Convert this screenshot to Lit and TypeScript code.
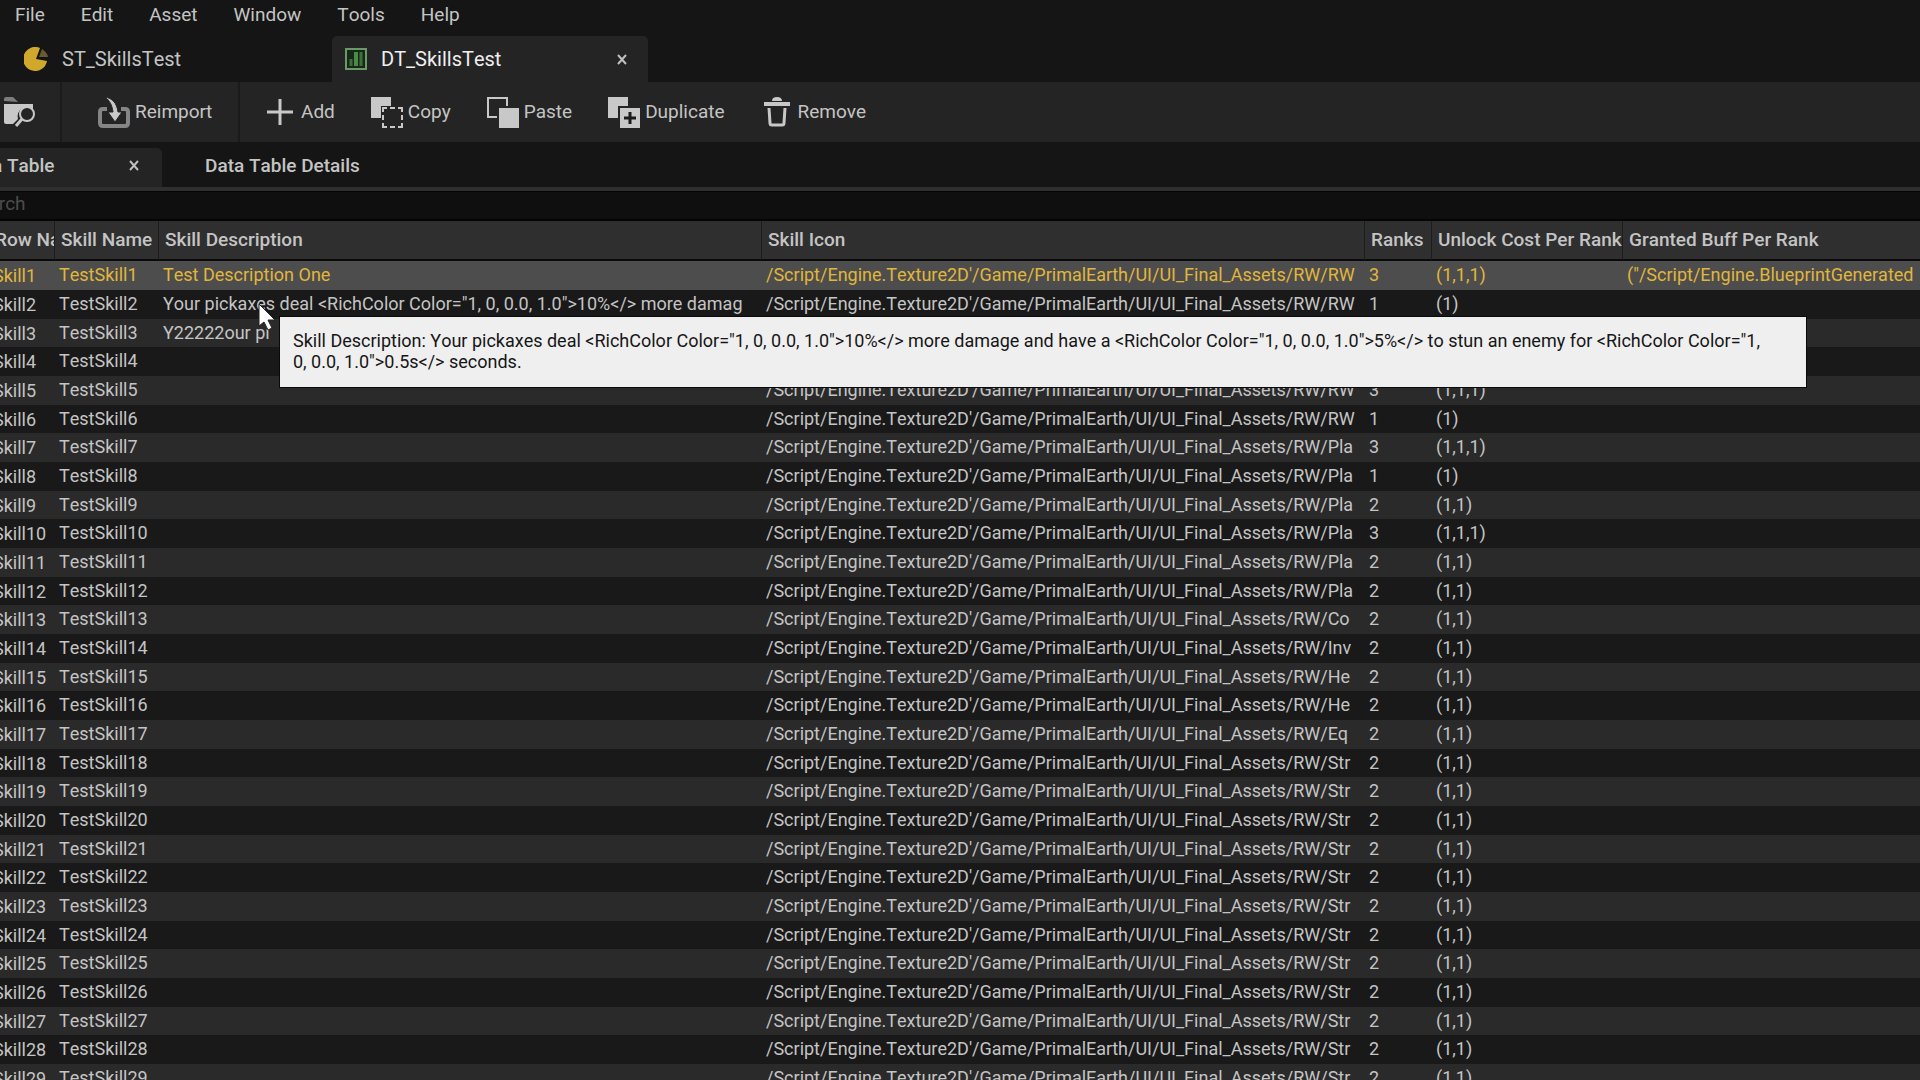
import { LitElement, html, css, svg } from "lit";
import { customElement } from "lit/decorators.js";

interface SkillRow {
  name: string;
  description: string;
  icon: string;
  ranks: number;
  buff: string;
}

const ICON_ROOT = "/Script/Engine.Texture2D'/Game/PrimalEarth/UI/UI_Final_Assets/RW/";
const SECOND_SHORT = 'Your pickaxes deal <RichColor Color="1, 0, 0.0, 1.0">10%</> more damag';
const SECOND =
  SECOND_SHORT +
  'e and have a <RichColor Color="1, 0, 0.0, 1.0">5%</> to stun an enemy for <RichColor Color="1, 0, 0.0, 1.0">0.5s</> seconds.';

const DESCRIPTIONS: Record<number, string> = {
  1: "Test Description One",
  2: SECOND_SHORT,
  3: "Y22222our pi",
};
const RANKS: Record<number, number> = { 1: 3, 2: 1, 5: 3, 6: 1, 7: 3, 8: 1, 10: 3 };

const iconFile = (n: number): string => {
  if (n <= 6) return "RW";
  if (n <= 12) return "Pla";
  if (n === 13) return "Co";
  if (n === 14) return "Inv";
  if (n <= 16) return "He";
  if (n === 17) return "Eq";
  return "Str";
};

const ROWS: SkillRow[] = Array.from({ length: 29 }, (_, i) => {
  const n = i + 1;
  return {
    name: `Skill${n}`,
    description: DESCRIPTIONS[n] ?? "",
    icon: ICON_ROOT + iconFile(n),
    ranks: RANKS[n] ?? 2,
    buff: n === 1 ? `("/Script/Engine.BlueprintGenerated` : "",
  };
});

const cost = (ranks: number) => `(${Array(ranks).fill("1").join(",")})`;

const icons = {
  browse: svg`<path d="M1 5V3q0-2 2-2h7l5 5z" fill="#7d7d7d"/><path d="M1 8h29v6a9 9 0 0 0-15 9l-5 5H3q-2 0-2-2z" fill="#c8c8c8"/><circle cx="24" cy="18" r="7" fill="#242424" stroke="#c8c8c8" stroke-width="2"/><path d="M19 23l-6 7" stroke="#c8c8c8" stroke-width="3"/>`,
  reimport: svg`<path d="M9 13H5q-3 0-3 3v11q0 3 3 3h22q3 0 3-3V16q0-3-3-3h-4" fill="none" stroke="#858585" stroke-width="4"/><path d="M7 1c7 1 12 6 13 15h4l-7 10-7-10h5C14 9 12 5 7 1z" fill="#c8c8c8" stroke="#242424" stroke-width="1"/>`,
  add: svg`<path d="M16 3v26M3 16h26" stroke="#c8c8c8" stroke-width="3"/>`,
  copy: svg`<path d="M0 1h20v9H10v12H0z" fill="#c8c8c8"/><path d="M12 16v-4h4M27 12h4v4M31 27v4h-4M16 31h-4v-4M19 12h5M19 31h5M12 19v5M31 19v5" fill="none" stroke="#c8c8c8" stroke-width="2"/>`,
  paste: svg`<path d="M10 21H1V2h19v8" fill="none" stroke="#c8c8c8" stroke-width="2"/><rect x="12" y="12" width="20" height="20" fill="#c8c8c8"/>`,
  duplicate: svg`<path d="M0 1h20v9H10v12H0z" fill="#c8c8c8"/><rect x="12" y="12" width="20" height="20" fill="#c8c8c8"/><path d="M22 16v12M16 22h12" stroke="#1b1b1b" stroke-width="3"/>`,
  remove: svg`<path d="M11 5q0-4 5-4t5 4z" fill="#c8c8c8"/><path d="M3 8h26" stroke="#c8c8c8" stroke-width="4"/><path d="M8 12l1 15q0 2 2 2h10q2 0 2-2l1-15" fill="none" stroke="#c8c8c8" stroke-width="3"/>`,
};

@customElement("app-root")
export class AppRoot extends LitElement {
  static styles = css`
    :host {
      display: block;
      height: 100vh;
      overflow: hidden;
      background: #151515;
      color: #c4c4c4;
      font: 19px/24px Roboto, "Liberation Sans", sans-serif;
      font-kerning: none;
    }
    button, input {
      font: inherit;
      font-kerning: inherit;
      color: inherit;
      background: none;
      border: 0;
      padding: 0;
      margin: 0;
    }
    svg { flex: none; display: block; }
    .window { margin-left: -40px; position: relative; }
    .menu { display: flex; gap: 36px; height: 36px; padding: 0 0 6px 55px; box-sizing: border-box; }
    .tabs { display: flex; height: 46px; font-size: 20px; }
    .tab { display: flex; align-items: center; gap: 14px; box-sizing: border-box; }
    .doc { width: 372px; padding-left: 64px; }
    .doc.active {
      width: 316px;
      padding: 0 20px 0 13px;
      background: #242424;
      color: #efefef;
      border-radius: 5px 5px 0 0;
    }
    .label { flex: 1; text-align: left; }
    .close { display: flex; }
    .toolbar { display: flex; height: 60px; background: #242424; }
    .group { display: flex; align-items: center; gap: 36px; border-right: 2px solid #1b1b1b; box-sizing: border-box; }
    .group.first { width: 102px; padding-left: 43px; }
    .group.second { width: 178px; padding-left: 36px; }
    .group.last { flex: 1; border: 0; padding-left: 24px; }
    .tool { display: flex; align-items: center; gap: 5px; }
    .panels { display: flex; height: 49px; padding-top: 6px; box-sizing: border-box; border-bottom: 4px solid #2f2f2f; font-weight: 500; }
    .panel { display: flex; align-items: center; padding-bottom: 4px; }
    .panel.active { width: 202px; padding: 0 22px 4px 3px; box-sizing: border-box; background: #242424; border-radius: 0 5px 0 0; }
    .panel.other { padding-left: 43px; }
    .search {
      display: block;
      width: 100%;
      height: 30px;
      box-sizing: border-box;
      padding: 0 7px 5px;
      background: #0f0f0f;
      border: solid #050505;
      border-width: 1px 0 2px;
      outline: 0;
    }
    .search::placeholder { color: #4c4c4c; opacity: 1; }
    .grid { width: 100%; table-layout: fixed; border-collapse: separate; border-spacing: 0; }
    .c-row { width: 94px; }
    .c-name { width: 104px; }
    .c-desc, .c-icon { width: 603px; }
    .c-ranks { width: 67px; }
    .c-cost { width: 191px; }
    .grid th {
      height: 40px;
      box-sizing: border-box;
      padding: 0 0 0 6px;
      text-align: left;
      font-weight: 500;
      background: #2f2f2f;
      border-left: 1px solid #1d1d1d;
      border-bottom: 2px solid #0a0a0a;
      white-space: nowrap;
      overflow: hidden;
    }
    .grid td { height: 29px; padding: 0 7px 0 5px; vertical-align: top; font-size: 18px; }
    .grid td:last-child { padding-right: 0; }
    .grid tbody tr:nth-child(3n) td { height: 28px; }
    .cell { overflow: hidden; white-space: nowrap; height: 28px; line-height: 28px; }
    .grid th.key { padding-left: 34px; }
    .grid td.key { padding-left: 33px; }
    .key .cell { line-height: 30px; }
    .grid tbody tr { background: #2a2a2a; }
    .grid tbody tr:nth-child(even) { background: #191919; }
    .grid tbody tr.selected { background: #4d4d4d; color: #e0b63c; }
    .tooltip {
      position: absolute;
      left: 319px;
      top: 316px;
      width: 1528px;
      box-sizing: border-box;
      padding: 13px 38px 15px 13px;
      font-size: 18px;
      line-height: 21px;
      background: #efefef;
      color: #161616;
      border: 1px solid #0a0a0a;
    }
    .cursor { position: absolute; left: 298px; top: 303px; }
  `;

  private glyph(content: unknown, size = 32, box = 32) {
    return html`<svg width=${size} height=${size} viewBox="0 0 ${box} ${box}" aria-hidden="true">${content}</svg>`;
  }

  private closeIcon() {
    return this.glyph(svg`<path d="M1 1l8 9M9 1l-8 9" stroke="#c0c0c0" stroke-width="2"/>`, 11, 11);
  }

  private tool(icon: unknown, label: string) {
    return html`<button class="tool">${this.glyph(icon)}<span>${label}</span></button>`;
  }

  render() {
    return html`
      <div class="window">
        <nav class="menu">
          ${["File", "Edit", "Asset", "Window", "Tools", "Help"].map((m) => html`<button>${m}</button>`)}
        </nav>
        <div class="tabs">
          <button class="tab doc">
            ${this.glyph(svg`<path d="M12 12L16 1A12 12 0 1 0 23 14z" fill="#d0a92c"/><path d="M15 10l3-8q5 3 6 8z" fill="#6a5a2c"/>`, 24, 24)}
            <span class="label">ST_SkillsTest</span>
          </button>
          <div class="tab doc active">
            ${this.glyph(svg`<rect x="1" y="1" width="20" height="20" fill="#17281a" stroke="#6c9a66" stroke-width="2"/><path d="M6 11v7" stroke="#3c7038" stroke-width="3"/><path d="M11 4v14" stroke="#4c8a48" stroke-width="4"/><path d="M16 4v14" stroke="#3c7038" stroke-width="3"/>`, 22, 22)}
            <span class="label">DT_SkillsTest</span>
            <button class="close" aria-label="Close DT_SkillsTest">${this.closeIcon()}</button>
          </div>
        </div>
        <div class="toolbar">
          <div class="group first"><button class="tool" aria-label="Browse">${this.glyph(icons.browse)}</button></div>
          <div class="group second">${this.tool(icons.reimport, "Reimport")}</div>
          <div class="group last">
            ${this.tool(icons.add, "Add")} ${this.tool(icons.copy, "Copy")} ${this.tool(icons.paste, "Paste")}
            ${this.tool(icons.duplicate, "Duplicate")} ${this.tool(icons.remove, "Remove")}
          </div>
        </div>
        <div class="panels">
          <div class="panel active">
            <span class="label">Data Table</span>
            <button class="close" aria-label="Close Data Table">${this.closeIcon()}</button>
          </div>
          <button class="panel other">Data Table Details</button>
        </div>
        <input class="search" type="text" placeholder="Search" aria-label="Search" />
        <table class="grid">
          <colgroup>
            <col class="c-row" /><col class="c-name" /><col class="c-desc" /><col class="c-icon" />
            <col class="c-ranks" /><col class="c-cost" /><col />
          </colgroup>
          <thead>
            <tr>
              <th class="key">Row Name</th>
              <th>Skill Name</th>
              <th>Skill Description</th>
              <th>Skill Icon</th>
              <th>Ranks</th>
              <th>Unlock Cost Per Rank</th>
              <th>Granted Buff Per Rank</th>
            </tr>
          </thead>
          <tbody>
            ${ROWS.map(
              (r, i) => html`<tr class=${i === 0 ? "selected" : ""}>
                <td class="key"><div class="cell">${r.name}</div></td>
                <td><div class="cell">Test${r.name}</div></td>
                <td><div class="cell">${r.description}</div></td>
                <td><div class="cell">${r.icon}</div></td>
                <td><div class="cell">${r.ranks}</div></td>
                <td><div class="cell">${cost(r.ranks)}</div></td>
                <td><div class="cell">${r.buff}</div></td>
              </tr>`
            )}
          </tbody>
        </table>
        <div class="tooltip" role="tooltip">Skill Description: ${SECOND}</div>
        <svg class="cursor" width="20" height="28" viewBox="0 0 20 28" aria-hidden="true">
          <path d="M1 1v22l5-4 4 8 4-2-4-8h7z" fill="#fff" stroke="#222" stroke-width="1"/>
        </svg>
      </div>
    `;
  }
}
